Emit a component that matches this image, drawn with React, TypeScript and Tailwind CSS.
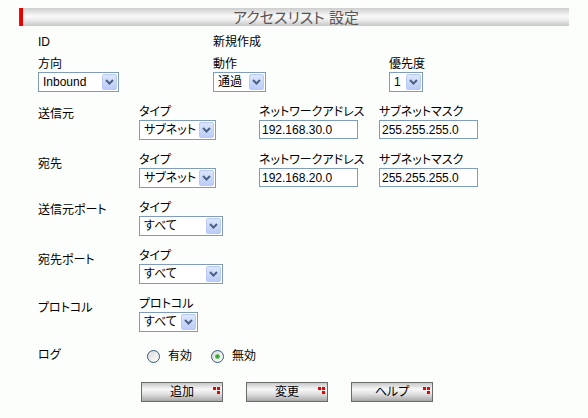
const font = "font-['Liberation_Sans','Noto_Sans_CJK_JP',sans-serif] [font-feature-settings:'palt']";

function Chevron() {
  return (
    <svg width="9" height="6" viewBox="0 0 9 6">
      <path d="M1 1 L4.5 4.5 L8 1" stroke="#4d6185" strokeWidth="2" fill="none" />
    </svg>
  );
}

function Select({ value, w }: { value: string; w: string }) {
  return (
    <div className={`flex h-[20px] items-center border border-[#7f9db9] bg-white pr-[1px] ${w}`}>
      <span className="flex-1 whitespace-nowrap pl-[4px] text-[12px] leading-none">{value}</span>
      <span className="flex h-[16px] w-[15px] items-center justify-center rounded-[2px] border border-[#b9cbf4] bg-[linear-gradient(#dce6fd,#b9cdf8)]">
        <Chevron />
      </span>
    </div>
  );
}

function Field({ value }: { value: string }) {
  return (
    <input
      readOnly
      value={value}
      className="block h-[19px] w-[99px] border border-[#7f9db9] bg-white pl-[2px] text-[12px] leading-none outline-none"
    />
  );
}

function Radio({ checked }: { checked?: boolean }) {
  return (
    <svg width="13" height="13" viewBox="0 0 13 13">
      <defs>
        <linearGradient id="rg" x1="0" y1="0" x2="1" y2="1">
          <stop offset="0" stopColor="#d8d8d2" />
          <stop offset="1" stopColor="#ffffff" />
        </linearGradient>
      </defs>
      <circle cx="6.5" cy="6.5" r="6" fill="url(#rg)" stroke="#2c5a8c" />
      {checked && <circle cx="6.5" cy="6.5" r="2.3" fill="#2fae2f" />}
    </svg>
  );
}

function Mark() {
  return (
    <svg width="7" height="7" viewBox="0 0 7 7" className="absolute right-[2px] top-[4px]">
      <rect x="0" y="0" width="3" height="3" fill="#ee0000" />
      <rect x="4" y="0" width="3" height="3" fill="#ee0000" />
      <rect x="4" y="4" width="3" height="3" fill="#ee0000" />
    </svg>
  );
}

function Btn({ label }: { label: string }) {
  return (
    <button className="relative flex h-[20px] w-[82px] items-center justify-center border border-[#6b6b6b] bg-[linear-gradient(#c9c9c9,#f7f7f7_35%,#e2e2e2_60%,#a8a8a8)] text-[12px] leading-none text-black">
      {label}
      <Mark />
    </button>
  );
}

function Section({
  label,
  pt,
  typeLabel,
  select,
  net,
  mask,
}: {
  label: string;
  pt: string;
  typeLabel: string;
  select: React.ReactNode;
  net?: string;
  mask?: string;
}) {
  return (
    <div className="mt-[13px] flex">
      <div className={`w-[101px] text-[12px] leading-[15px] ${pt}`}>{label}</div>
      <div className="w-[120px]">
        <div className="h-[15px] text-[12px] leading-[15px]">{typeLabel}</div>
        {select}
      </div>
      {net && (
        <div className="w-[120px]">
          <div className="h-[15px] text-[12px] leading-[15px]">ネットワークアドレス</div>
          <Field value={net} />
        </div>
      )}
      {mask && (
        <div>
          <div className="h-[15px] text-[12px] leading-[15px]">サブネットマスク</div>
          <Field value={mask} />
        </div>
      )}
    </div>
  );
}

export default function App() {
  return (
    <div className={`min-h-screen bg-[#fcfefc] text-black ${font}`}>
      <div className="pl-[19px] pt-[8px]">
        <div className="flex h-[18px] w-[550px]">
          <span className="w-[1px] bg-[#555555]" />
          <span className="w-[3px] bg-[#e60000]" />
          <div className="flex flex-1 items-center justify-center bg-[linear-gradient(#cdcdcd,#f9f9f9_45%,#eeeeee_65%,#c6c6c6)] text-[15px] leading-none text-[#555555]">
            アクセスリスト 設定
          </div>
        </div>
      </div>

      <div className="pl-[38px]">
        <div className="mt-[9px] flex h-[14px] text-[12px] leading-[14px]">
          <div className="w-[175px]">ID</div>
          <div>新規作成</div>
        </div>

        <div className="mt-[8px] flex">
          <div className="w-[175px]">
            <div className="h-[15px] text-[12px] leading-[15px]">方向</div>
            <Select value="Inbound" w="w-[81px]" />
          </div>
          <div className="w-[176px]">
            <div className="h-[15px] text-[12px] leading-[15px]">動作</div>
            <Select value="通過" w="w-[53px]" />
          </div>
          <div>
            <div className="h-[15px] text-[12px] leading-[15px]">優先度</div>
            <Select value="1" w="w-[34px]" />
          </div>
        </div>

        <Section
          label="送信元"
          pt="pt-[2px]"
          typeLabel="タイプ"
          select={<Select value="サブネット" w="w-[77px]" />}
          net="192.168.30.0"
          mask="255.255.255.0"
        />
        <Section
          label="宛先"
          pt="pt-[4px]"
          typeLabel="タイプ"
          select={<Select value="サブネット" w="w-[77px]" />}
          net="192.168.20.0"
          mask="255.255.255.0"
        />
        <Section
          label="送信元ポート"
          pt="pt-[2px]"
          typeLabel="タイプ"
          select={<Select value="すべて" w="w-[84px]" />}
        />
        <Section
          label="宛先ポート"
          pt="pt-[4px]"
          typeLabel="タイプ"
          select={<Select value="すべて" w="w-[84px]" />}
        />
        <Section
          label="プロトコル"
          pt="pt-[4px]"
          typeLabel="プロトコル"
          select={<Select value="すべて" w="w-[59px]" />}
        />

        <div className="mt-[17px] flex h-[14px] items-center text-[12px]">
          <div className="w-[109px] self-start leading-[12px]">ログ</div>
          <div className="flex w-[64px] items-center gap-[8px]">
            <Radio />
            <span>有効</span>
          </div>
          <div className="flex items-center gap-[8px]">
            <Radio checked />
            <span>無効</span>
          </div>
        </div>

        <div className="mt-[19px] flex gap-[23px] pl-[103px]">
          <Btn label="追加" />
          <Btn label="変更" />
          <Btn label="ヘルプ" />
        </div>
      </div>
    </div>
  );
}
